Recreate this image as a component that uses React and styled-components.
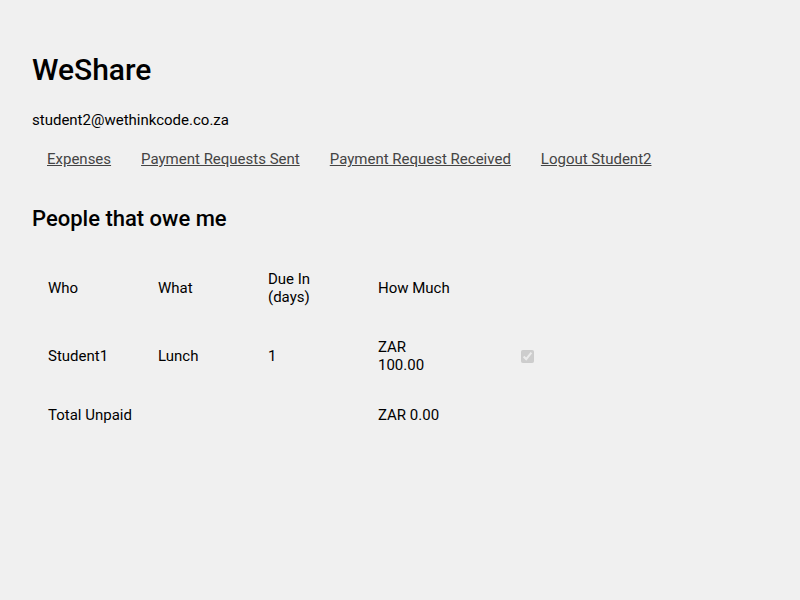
import React from 'react'
import styled, { createGlobalStyle } from 'styled-components'

const GlobalStyle = createGlobalStyle`
  html, body {
    margin: 0;
    background: #f0f0f0;
    color: #000;
    font-family: Roboto, 'Liberation Sans', sans-serif;
  }
`

const Page = styled.div`
  padding: 50px 32px 32px;
`

const Title = styled.h1`
  font-size: 30px;
  font-weight: 500;
  margin: 0 0 20px;
  line-height: 40px;
`

const Email = styled.div`
  font-size: 15px;
  line-height: 20px;
  margin-bottom: 18px;
`

const Nav = styled.nav`
  display: flex;
  padding-left: 15px;
  gap: 30px;
  font-size: 15px;
  line-height: 22px;
`

const NavLink = styled.a`
  color: #444;
  text-decoration: underline;
  cursor: pointer;
`

const Heading = styled.h2`
  font-size: 22px;
  font-weight: 500;
  margin: 34px 0 0;
  line-height: 30px;
`

const Table = styled.table`
  margin-top: 20px;
  border-collapse: collapse;
  table-layout: fixed;
  width: 600px;
  font-size: 15px;
`

const Col = styled.col`
  width: ${p => p.$w || '110px'};
`

const Cell = styled.td`
  box-sizing: border-box;
  padding: 16px 20px 16px ${p => p.$pl || '16px'};
  line-height: 18px;
  vertical-align: middle;
  text-align: left;
  font-weight: 400;
`

const Check = styled.input`
  margin: 0;
  width: 13px;
  height: 13px;
  display: block;
`

export default function App() {
  return (
    <Page>
      <GlobalStyle />
      <Title>WeShare</Title>
      <Email>student2@wethinkcode.co.za</Email>
      <Nav>
        <NavLink>Expenses</NavLink>
        <NavLink>Payment Requests Sent</NavLink>
        <NavLink>Payment Request Received</NavLink>
        <NavLink>Logout Student2</NavLink>
      </Nav>
      <Heading>People that owe me</Heading>
      <Table>
        <colgroup>
          <Col />
          <Col />
          <Col />
          <Col />
          <Col $w="160px" />
        </colgroup>
        <thead>
          <tr>
            <Cell as="th">Who</Cell>
            <Cell as="th">What</Cell>
            <Cell as="th">Due In (days)</Cell>
            <Cell as="th">How Much</Cell>
            <Cell as="th" $pl="49px" />
          </tr>
        </thead>
        <tbody>
          <tr>
            <Cell>Student1</Cell>
            <Cell>Lunch</Cell>
            <Cell>1</Cell>
            <Cell>ZAR 100.00</Cell>
            <Cell $pl="49px">
              <Check type="checkbox" checked disabled readOnly />
            </Cell>
          </tr>
          <tr>
            <Cell colSpan={3}>Total Unpaid</Cell>
            <Cell>ZAR 0.00</Cell>
            <Cell $pl="49px" />
          </tr>
        </tbody>
      </Table>
    </Page>
  )
}
